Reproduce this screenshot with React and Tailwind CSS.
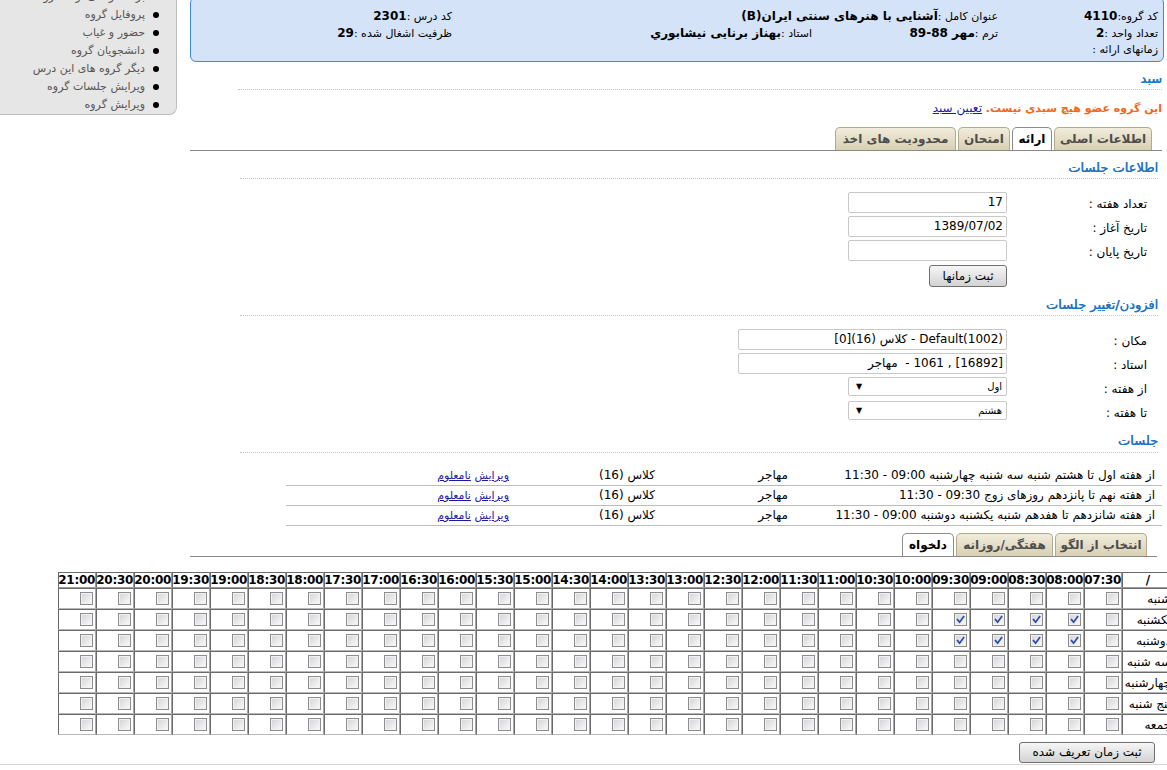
import React from "react";

const times = [
  "07:30","08:00","08:30","09:00","09:30","10:00","10:30","11:00","11:30","12:00",
  "12:30","13:00","13:30","14:00","14:30","15:00","15:30","16:00","16:30","17:00",
  "17:30","18:00","18:30","19:00","19:30","20:00","20:30","21:00",
];
const days = ["شنبه","یکشنبه","دوشنبه","سه شنبه","چهارشنبه","پنج شنبه","جمعه"];

function Cb({ checked }) {
  return (
    <span className="inline-flex items-center justify-center w-[13px] h-[13px] border border-[#8d8d8d] bg-linear-to-br from-[#d2d3d6] to-[#fbfbfb] shadow-[inset_0_0_0_1px_#f2f2f2] align-middle">
      {checked && (
        <svg viewBox="0 0 11 11" className="w-[11px] h-[11px] block">
          <path d="M2.5 5.6 L4.6 8.2 L8.6 2.6" stroke="#2a4aa8" strokeWidth="1.7" fill="none" strokeLinecap="square" />
        </svg>
      )}
    </span>
  );
}

function Tab({ label, w, active }) {
  return (
    <div
      className={
        "h-[23px] " + w + " shrink-0 rounded-t-[5px] border border-b-0 text-center text-[12px] font-bold leading-[22px] " +
        (active
          ? "bg-white border-[#8c8c8c] text-black"
          : "bg-linear-to-b from-[#f1ecdc] to-[#d8d0b3] border-[#b3aa8d] text-[#4d4d4d]")
      }
    >
      {label}
    </div>
  );
}

function Heading({ children, className = "" }) {
  return (
    <div className={"mr-[9px] ml-[50px] border-b border-dotted border-[#c4c4c4] leading-[18px] text-[13px] text-[#1b74c4] [text-shadow:0.45px_0_0_#1b74c4] " + className}>
      {children}
    </div>
  );
}

function FormRow({ label, children }) {
  return (
    <div className="flex h-[24px] items-start">
      <div className="w-[151px] shrink-0 pr-[11px] pt-[3px] leading-[18px] text-[12px]">{label}</div>
      {children}
    </div>
  );
}

function Field({ value, w = "w-[159px]" }) {
  return (
    <div className={"h-[21px] " + w + " border border-[#c9c9c9] rounded-[2px] bg-white pr-[3px] text-[12px] leading-[19px] whitespace-pre overflow-hidden"}>
      {value}
    </div>
  );
}

function Select({ value }) {
  return (
    <div className="h-[19px] w-[159px] border border-[#c9c9c9] rounded-[2px] bg-white flex items-center justify-between pr-[4px] pl-[7px]">
      <span className="text-[10px] leading-[17px]">{value}</span>
      <span className="text-[8px] leading-none">▼</span>
    </div>
  );
}

function Btn({ children, w }) {
  return (
    <div className={"h-[22px] " + w + " border border-[#707070] rounded-[3px] bg-linear-to-b from-[#f6f6f6] to-[#d3d3d3] text-center text-[12px] leading-[20px]"}>
      {children}
    </div>
  );
}

const sessions = [
  "از هفته اول تا هشتم شنبه سه شنبه چهارشنبه 09:00 - 11:30",
  "از هفته نهم تا پانزدهم روزهای زوج 09:30 - 11:30",
  "از هفته شانزدهم تا هفدهم شنبه یکشنبه دوشنبه 09:00 - 11:30",
];

const sideItems = [
  "برنامه زمانی ارائه گروه",
  "پروفایل گروه",
  "حضور و غیاب",
  "دانشجویان گروه",
  "دیگر گروه های این درس",
  "ویرایش جلسات گروه",
  "ویرایش گروه",
];

export default function App() {
  return (
    <div dir="rtl" className="w-[1167px] h-[770px] overflow-hidden bg-white font-['DejaVu_Sans',sans-serif] text-[11px] text-black">
      <div className="flex items-start">
        <main className="w-[977px] shrink-0">
          {/* header info box */}
          <div className="mr-[3px] -mt-[3px] border border-[#3a8ddb] rounded-[6px] bg-[#d4e3f8] pt-[10px] pb-[3px] pr-[5px]">
            <div className="grid grid-cols-[160px_186px_360px_1fr] text-[11px] leading-[16px] whitespace-nowrap">
              <div>کد گروه:<b className="text-[12px]">4110</b></div>
              <div className="col-span-2">عنوان کامل :<b className="text-[12px]">آشنایی با هنرهای سنتی ایران(B)</b></div>
              <div>کد درس :<b className="text-[12px]">2301</b></div>
              <div>تعداد واحد :<b className="text-[12px]">2</b></div>
              <div>ترم :<b className="text-[12px]">مهر 88-89</b></div>
              <div>استاد :<b className="text-[12px]">بهناز برنایی نیشابوري</b></div>
              <div>ظرفیت اشغال شده :<b className="text-[12px]">29</b></div>
              <div>زمانهای ارائه :</div>
            </div>
          </div>

          {/* basket */}
          <div className="mt-[8px] mr-[5px] ml-[48px] border-b border-dotted border-[#c4c4c4] leading-[18px] pb-[1px] text-[13px] text-[#1b74c4] [text-shadow:0.45px_0_0_#1b74c4]">
            سبد
          </div>
          <div className="mt-[9px] mr-[5px] leading-[18px] text-[12px]">
            <span className="font-bold text-[11px] text-[#f4661b]">این گروه عضو هیچ سبدی نیست.</span>{" "}
            <span className="text-[#1a1aa6] underline">تعیین سبد</span>
          </div>

          {/* upper tabs */}
          <div className="mt-[9px] mr-[5px] flex items-end gap-[2px] pr-[10px] border-b border-[#8a8a8a]">
            <Tab label="اطلاعات اصلی" w="w-[98px]" />
            <Tab label="ارائه" w="w-[40px]" active />
            <Tab label="امتحان" w="w-[52px]" />
            <Tab label="محدودیت های اخذ" w="w-[121px]" />
          </div>

          {/* session info */}
          <Heading className="mt-[8px] pb-[1px]">اطلاعات جلسات</Heading>
          <div className="mt-[13px] mr-[9px]">
            <FormRow label="تعداد هفته :"><Field value="17" /></FormRow>
            <FormRow label="تاریخ آغاز :"><Field value="1389/07/02" /></FormRow>
            <FormRow label="تاریخ پایان :"><Field value="" /></FormRow>
            <div className="mt-[1px] mr-[151px]"><Btn w="w-[78px]">ثبت زمانها</Btn></div>
          </div>

          <Heading className="mt-[9px] pb-[1px]">افزودن/تغییر جلسات</Heading>
          <div className="mt-[13px] mr-[9px]">
            <FormRow label="مکان :"><Field w="w-[269px]" value="Default(1002) - کلاس (16)[0]" /></FormRow>
            <FormRow label="استاد :"><Field w="w-[269px]" value="[16892] , 1061 -  مهاجر" /></FormRow>
            <FormRow label="از هفته :"><Select value="اول" /></FormRow>
            <FormRow label="تا هفته :"><Select value="هشتم" /></FormRow>
          </div>

          <Heading className="mt-[7px] pb-[2px]">جلسات</Heading>
          <div className="mt-[13px] mr-[5px] w-[876px] text-[12px]">
            {sessions.map((s, i) => (
              <div key={i} className="flex h-[20px] border-b border-[#bdbdbd] leading-[19px] whitespace-nowrap">
                <div className="w-[367px] pr-[7px]">{s}</div>
                <div className="w-[133px] pr-[7px]">مهاجر</div>
                <div className="w-[146px] pr-[7px]">کلاس (16)</div>
                <div className="w-[230px] pr-[7px] text-[11px]">
                  <span className="text-[#1a1aa6] underline">ویرایش</span>{" "}
                  <span className="text-[#1a1aa6] underline">نامعلوم</span>
                </div>
              </div>
            ))}
          </div>

          {/* lower tabs */}
          <div className="mt-[7px] mr-[10px] flex items-end gap-[2px] pr-[10px] border-b border-[#8a8a8a]">
            <Tab label="انتخاب از الگو" w="w-[92px]" />
            <Tab label="هفتگی/روزانه" w="w-[97px]" />
            <Tab label="دلخواه" w="w-[52px]" active />
          </div>

          {/* time grid */}
          <div className="mt-[15px] -mr-[7px]">
            <table className="table-fixed border-separate border-spacing-0 w-[1116px]">
              <colgroup>
                <col className="w-[52px]" />
                {times.map((t) => (
                  <col key={t} className="w-[38px]" />
                ))}
              </colgroup>
              <thead>
                <tr className="h-[16px]">
                  <th className="border border-t-[#6a6a6a] border-l-[#6a6a6a] border-r-[#9a9a9a] border-b-[#9a9a9a] p-0 text-[12px] font-bold leading-[14px] text-center">/</th>
                  {times.map((t) => (
                    <th key={t} className="border border-t-[#6a6a6a] border-l-[#6a6a6a] border-r-[#9a9a9a] border-b-[#9a9a9a] p-0 text-[12px] font-bold leading-[14px] text-center tracking-[-0.3px]">
                      {t}
                    </th>
                  ))}
                </tr>
              </thead>
              <tbody>
                {days.map((d, r) => (
                  <tr key={d} className="h-[21px]">
                    <td className="border border-t-[#6a6a6a] border-l-[#6a6a6a] border-r-[#a8a8a8] border-b-[#b8b8b8] p-0 pr-[2px] text-[12px] whitespace-nowrap overflow-hidden">
                      {d}
                    </td>
                    {times.map((t, c) => (
                      <td key={t} className="border border-t-[#6a6a6a] border-l-[#6a6a6a] border-r-[#a8a8a8] border-b-[#b8b8b8] p-0 pr-[2px] leading-none">
                        <Cb checked={(r === 1 || r === 2) && c >= 1 && c <= 4} />
                      </td>
                    ))}
                  </tr>
                ))}
              </tbody>
            </table>
          </div>

          <div className="mt-[7px] mr-[12px] mb-[1px]">
            <div className="h-[21px] w-[136px] border border-[#707070] rounded-[3px] bg-linear-to-b from-[#f6f6f6] to-[#d3d3d3] text-center text-[12px] leading-[19px]">
              ثبت زمان تعریف شده
            </div>
          </div>
        </main>

        {/* sidebar */}
        <aside className="w-[177px] shrink-0 mr-[13px] -mt-[12px] bg-[#e6e6e6] border-r border-b border-[#bdbdbd] rounded-br-[8px]">
          {sideItems.map((it) => (
            <div key={it} className="flex items-center h-[18px] pr-[17px] gap-[8px] text-[11px] text-[#555555] whitespace-nowrap">
              <span className="w-[6px] h-[6px] rounded-full bg-black shrink-0" />
              <span>{it}</span>
            </div>
          ))}
        </aside>
      </div>
      <div className="border-t border-[#d6d6d6]" />
    </div>
  );
}
